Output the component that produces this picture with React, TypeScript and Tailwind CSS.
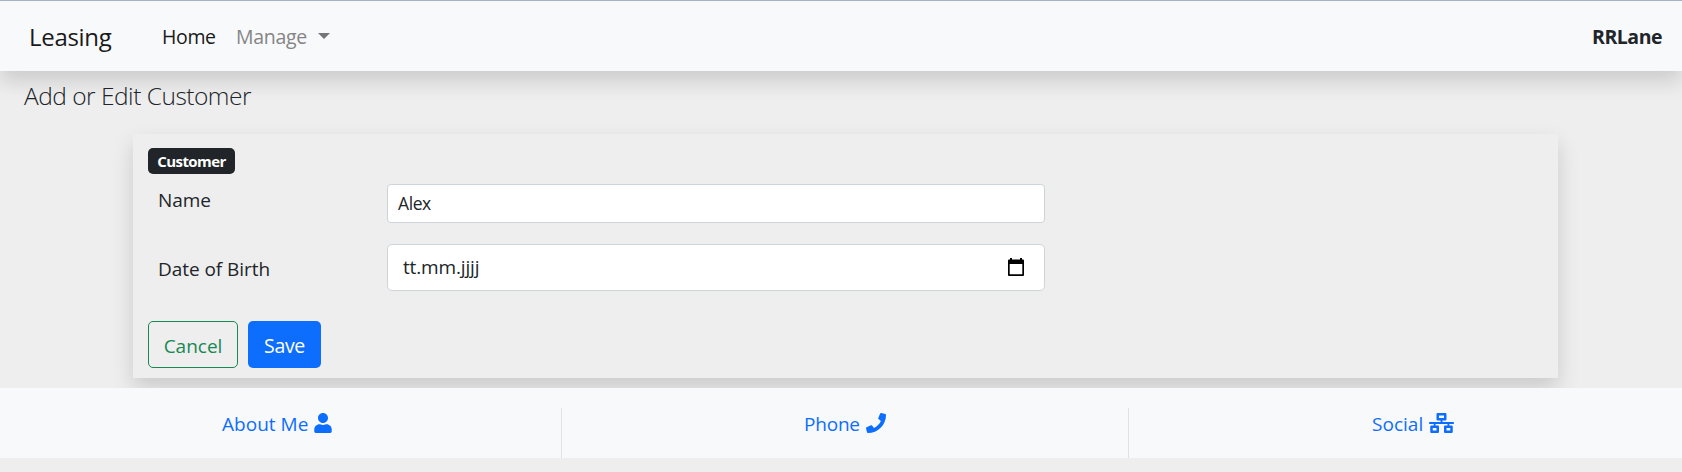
import type { ReactNode } from "react";
import { FaNetworkWired, FaPhone, FaUser } from "react-icons/fa";

function NavBar() {
  return (
    <nav className="relative z-10 flex h-[71px] items-center border-t border-[#a6b1cc] bg-[#f8f9fb] pl-[29px] pr-5 pt-[2px] shadow-[0_10px_20px_rgba(0,0,0,0.15)]">
      <a className="w-[133px] pb-px text-[24px] leading-8 tracking-[-0.3px] text-[#1a1a1a]">Leasing</a>
      <a className="w-[74px] text-[19.5px] leading-[30px] tracking-[-0.35px] text-[#1a1a1a]">Home</a>
      <a className="flex items-center text-[19.5px] leading-[30px] tracking-[-0.3px] text-[#858585]">
        <span className="w-[82px]">Manage</span>
        <span className="mb-[2px] h-0 w-0 border-x-[6px] border-t-[6px] border-x-transparent border-t-[#757575]" />
      </a>
      <span className="ml-auto text-[19.5px] font-bold leading-[30px] tracking-[-0.5px] text-[#212529]">RRLane</span>
    </nav>
  );
}

function CalendarIcon() {
  return (
    <svg viewBox="0 0 16 18" className="mb-[2px] h-[18px] w-4" fill="#000">
      <path fillRule="evenodd" d="M2 0h2v1.500h8V0h2v1.500h1a1 1 0 0 1 1 1V17a1 1 0 0 1-1 1H1a1 1 0 0 1-1-1V2.500a1 1 0 0 1 1-1h1zM1.700 6v10.300h12.600V6z" />
    </svg>
  );
}

function CustomerForm() {
  return (
    <section className="ml-[133px] mt-[17px] flex h-[244px] w-[1425px] flex-col bg-[#eee] px-[15px] pt-[14px] shadow-[0_10px_20px_rgba(0,0,0,0.15)]">
      <span className="flex h-[26px] w-[87px] items-center justify-center rounded-[5px] bg-[#212529] text-[15px] font-bold tracking-[-0.6px] text-white">Customer</span>
      <div className="mt-[10px] flex h-[39px]">
        <label className="w-[239px] pl-[10px] text-[19px] leading-[33px] tracking-[-0.1px] text-[#212529]">Name</label>
        <div className="flex w-[658px] items-center rounded-[4px] border border-[#ced4da] bg-white pl-[10px] text-[17.5px] tracking-[-0.4px] text-[#212529]">Alex</div>
      </div>
      <div className="mt-[21px] flex h-[47px]">
        <label className="w-[239px] pl-[10px] text-[19px] leading-[50px] tracking-[-0.05px] text-[#212529]">Date of Birth</label>
        <div className="flex w-[658px] items-center justify-between rounded-[5px] border border-[#ced4da] bg-white pl-[15px] pr-[20px] text-[19px] tracking-[-0.15px] text-[#212529]">
          <span>tt.mm.jjjj</span>
          <CalendarIcon />
        </div>
      </div>
      <div className="mt-[30px] flex h-[47px] gap-[10px]">
        <button className="w-[90px] rounded-[5px] border border-[#198754] pt-[3px] text-[19px] text-[#198754]">Cancel</button>
        <button className="w-[73px] rounded-[5px] bg-[#0d6efd] pt-[3px] text-[19.5px] tracking-[-0.35px] text-white">Save</button>
      </div>
    </section>
  );
}

function FooterLink({ text, icon, className }: { text: string; icon: ReactNode; className: string }) {
  return (
    <div className={`flex items-start text-[19px] leading-[33px] text-[#0d6efd] ${className}`}>
      <span>{text}</span>
      {icon}
    </div>
  );
}

export default function App() {
  return (
    <div className="h-[472px] overflow-hidden bg-[#eee] font-['Open_Sans','Noto_Sans',sans-serif]">
      <NavBar />
      <h1 className="relative z-20 ml-[24px] mt-[8px] h-[38px] text-[24.5px] font-light leading-[33px] tracking-[-0.5px] text-[#212529]">Add or Edit Customer</h1>
      <CustomerForm />
      <footer className="relative mt-[10px] flex h-[70px] bg-[#f8f9fb] pt-5">
        <FooterLink text="About Me" icon={<FaUser className="ml-[6px] mt-[5px] h-5 w-[18px]" />} className="w-[562px] border-r border-[#dee2e6] pl-[222px] tracking-[0.02px]" />
        <FooterLink text="Phone" icon={<FaPhone className="ml-[6px] mt-[5px] h-5 w-5" />} className="w-[567px] border-r border-[#dee2e6] pl-[242px] tracking-[-0.2px]" />
        <FooterLink text="Social" icon={<FaNetworkWired className="ml-[6px] mt-[5px] h-5 w-[25px]" />} className="flex-1 pl-[243px] tracking-[0.02px]" />
      </footer>
    </div>
  );
}
